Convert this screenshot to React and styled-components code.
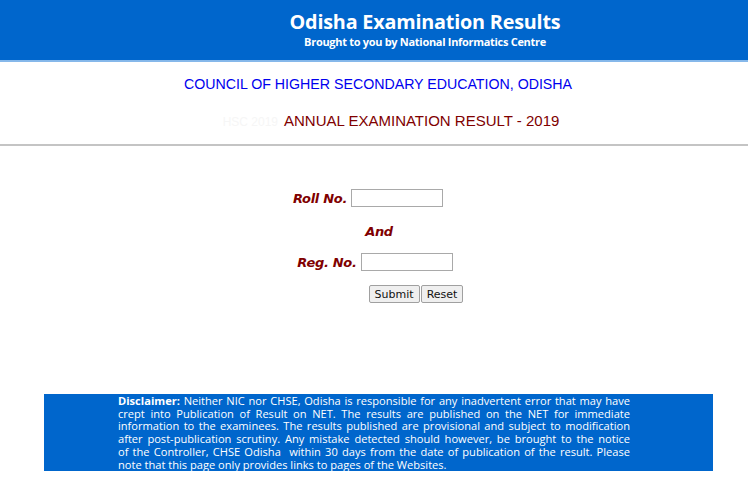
import React from "react";
import styled, { createGlobalStyle } from "styled-components";

const GlobalStyle = createGlobalStyle`
  html, body {
    margin: 0;
    padding: 0;
    background: #ffffff;
  }
  body {
    font-family: "Liberation Sans", Arial, sans-serif;
  }
`;

const disclaimerLines = [
  "Neither NIC nor CHSE, Odisha is responsible for any inadvertent error that may have",
  "crept into Publication of Result on NET. The results are published on the NET for immediate",
  "information to the examinees. The results published are provisional and subject to modification",
  "after post-publication scrutiny. Any mistake detected should however, be brought to the notice",
  "of the Controller, CHSE Odisha \u00a0within 30 days from the date of publication of the result. Please",
  "note that this page only provides links to pages of the Websites.",
];

export default function App() {
  return (
    <>
      <GlobalStyle />
      <Header>
        <Title>Odisha Examination Results</Title>
        <Subtitle>Brought to you by National Informatics Centre</Subtitle>
      </Header>

      <Board>
        <Council>COUNCIL OF HIGHER SECONDARY EDUCATION, ODISHA</Council>
        <ExamLine>
          <Ghost>HSC 2019</Ghost>
          <Exam>ANNUAL EXAMINATION RESULT - 2019</Exam>
        </ExamLine>
      </Board>

      <Form onSubmit={(e) => e.preventDefault()}>
        <Row $shift={-12} $top={42}>
          <Label>Roll No.</Label>
          <Input type="text" />
        </Row>
        <Row $shift={10} $top={13}>
          <Label>And</Label>
        </Row>
        <Row $shift={2} $top={11}>
          <Label>Reg. No.</Label>
          <Input type="text" />
        </Row>
        <Row $shift={84} $top={12}>
          <Buttons>
            <Button type="submit">Submit</Button>
            <Button type="reset">Reset</Button>
          </Buttons>
        </Row>
      </Form>

      <Disclaimer>
        {disclaimerLines.map((line, i) => (
          <Line key={i} $last={i === disclaimerLines.length - 1}>
            {i === 0 && <b>Disclaimer: </b>}
            {line}
          </Line>
        ))}
      </Disclaimer>
    </>
  );
}

const Header = styled.header`
  height: 60px;
  background: #0066cc;
  border-bottom: 2px solid #86b8ea;
  display: flex;
  flex-direction: column;
  align-items: center;
  padding-left: 102px;
  color: #ffffff;
  font-family: "Open Sans", "Liberation Sans", sans-serif;
`;

const Title = styled.div`
  margin-top: 10px;
  font-size: 19.8px;
  font-weight: 700;
  letter-spacing: -0.2px;
  line-height: 24px;
`;

const Subtitle = styled.div`
  font-size: 11px;
  font-weight: 700;
  letter-spacing: -0.3px;
  line-height: 16px;
`;

const Board = styled.section`
  border-bottom: 2px solid #c4c4c4;
  padding: 12px 0 12px;
  display: flex;
  flex-direction: column;
  align-items: center;
  font-family: "Liberation Sans", Arial, sans-serif;
`;

const Council = styled.div`
  color: #0000ee;
  font-size: 14.2px;
  line-height: 20px;
  padding-left: 8px;
`;

const ExamLine = styled.div`
  margin-top: 17px;
  padding-left: 34px;
  display: flex;
  gap: 6px;
  align-items: baseline;
  line-height: 20px;
`;

const Ghost = styled.span`
  color: #f6f6f6;
  font-size: 12px;
`;

const Exam = styled.span`
  color: #800000;
  font-size: 15px;
`;

const Form = styled.form`
  display: flex;
  flex-direction: column;
  align-items: center;
`;

const Row = styled.div`
  display: flex;
  align-items: center;
  gap: 4px;
  height: 20px;
  margin-top: ${(p) => p.$top}px;
  margin-left: ${(p) => (p.$shift > 0 ? p.$shift : 0)}px;
  margin-right: ${(p) => (p.$shift < 0 ? -p.$shift : 0)}px;
`;

const Label = styled.span`
  color: #800000;
  font-family: "DejaVu Sans", Verdana, sans-serif;
  font-style: italic;
  font-weight: 700;
  font-size: 13px;
  letter-spacing: -0.3px;
`;

const Input = styled.input`
  width: 88px;
  height: 14px;
  border: 1px solid #a9a9a9;
  padding: 1px 1px;
  margin: 0;
  background: #ffffff;
`;

const Buttons = styled.div`
  display: flex;
  gap: 1px;
`;

const Button = styled.button`
  height: 18px;
  padding: 0 5px;
  border: 1px solid #a0a0a0;
  border-radius: 2px;
  background: #efefef;
  font-family: "DejaVu Sans", Verdana, sans-serif;
  font-size: 11px;
  color: #111111;
`;

const Disclaimer = styled.div`
  margin: 90px 35px 0 44px;
  background: #0066cc;
  color: #ffffff;
  padding: 1px 83px 0 74px;
  font-family: "Open Sans", "Liberation Sans", sans-serif;
  font-size: 11.1px;
  line-height: 12.7px;
  b {
    font-weight: 700;
  }
`;

const Line = styled.div`
  white-space: nowrap;
  text-align: justify;
  text-align-last: ${(p) => (p.$last ? "left" : "justify")};
`;
